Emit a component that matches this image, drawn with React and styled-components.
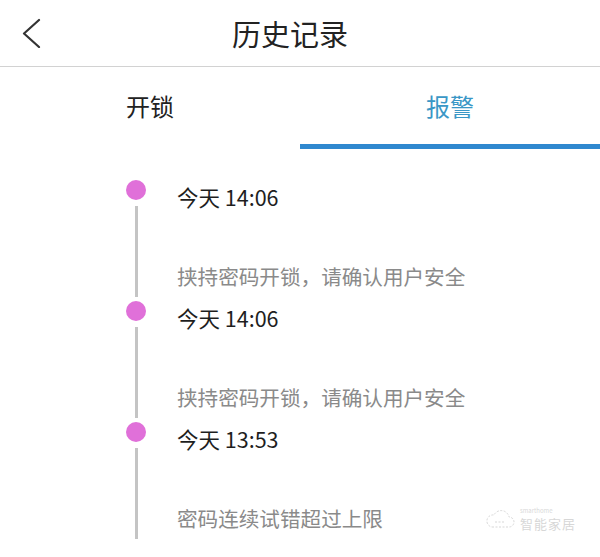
import React, { useState } from 'react';
import styled, { createGlobalStyle } from 'styled-components';

const GlobalStyle = createGlobalStyle`
  html, body {
    margin: 0;
    padding: 0;
    background: #ffffff;
  }
  body {
    font-family: "Noto Sans CJK SC", "Noto Sans", sans-serif;
  }
`;

const Page = styled.div`
  position: relative;
  width: 600px;
  height: 557px;
  overflow: hidden;
  background: #ffffff;
`;

const Header = styled.header`
  display: grid;
  grid-template-columns: 60px 1fr 80px;
  align-items: center;
  height: 66px;
  border-bottom: 1px solid #d2d2d2;
`;

const BackButton = styled.button`
  display: flex;
  align-items: center;
  justify-content: flex-start;
  padding: 0 0 0 20px;
  height: 100%;
  border: 0;
  background: none;
  cursor: pointer;
`;

const Title = styled.h1`
  margin: 0;
  text-align: center;
  font-size: 29px;
  font-weight: 400;
  color: #222222;
  line-height: 40px;
`;

const Tabs = styled.nav`
  display: flex;
`;

const Tab = styled.div`
  flex: 1;
  height: 82px;
  box-sizing: border-box;
  padding-top: 23px;
  text-align: center;
  font-size: 24px;
  line-height: 32px;
  color: ${({ active }) => (active ? '#3a97c6' : '#222222')};
  border-bottom: 5px solid ${({ active }) => (active ? '#2f88cf' : 'transparent')};
  cursor: pointer;
`;

const Timeline = styled.ul`
  list-style: none;
  margin: 0;
  padding: 31px 0 0 126px;
`;

const Item = styled.li`
  display: grid;
  grid-template-columns: 20px 1fr;
  column-gap: 31px;
  height: 121px;
`;

const Rail = styled.div`
  display: flex;
  flex-direction: column;
  align-items: center;
`;

const Dot = styled.span`
  width: 20px;
  height: 20px;
  border-radius: 50%;
  background: #e070d9;
  flex-shrink: 0;
`;

const Line = styled.span`
  flex: 1;
  width: 3px;
  margin: 6px 0 4px;
  background: #c4c4c4;
`;

const Content = styled.div`
  display: flex;
  flex-direction: column;
  padding-top: 3px;
`;

const Time = styled.div`
  font-size: 21.5px;
  line-height: 28px;
  color: #1e1e1e;
`;

const Desc = styled.div`
  margin-top: 51px;
  font-size: 20.6px;
  line-height: 28px;
  color: #8a8a8a;
`;

const Watermark = styled.div`
  position: absolute;
  right: 24px;
  bottom: 26px;
  display: flex;
  align-items: center;
  gap: 4px;
  opacity: 0.55;
`;

const MarkText = styled.div`
  display: flex;
  flex-direction: column;
  gap: 3px;
  color: #b8b8b8;
`;

const MarkSmall = styled.span`
  display: block;
  font-size: 6px;
  line-height: 6px;
`;

const MarkBig = styled.span`
  display: block;
  font-size: 13px;
  line-height: 14px;
  letter-spacing: 1px;
`;

const records = [
  { time: '今天 14:06', desc: '挟持密码开锁，请确认用户安全' },
  { time: '今天 14:06', desc: '挟持密码开锁，请确认用户安全' },
  { time: '今天 13:53', desc: '密码连续试错超过上限' },
];

export default function App() {
  const [tab, setTab] = useState(1);

  return (
    <Page>
      <GlobalStyle />
      <Header>
        <BackButton aria-label="返回">
          <svg width="22" height="30" viewBox="0 0 22 30">
            <polyline
              points="19,2 4,15.5 19,29"
              fill="none"
              stroke="#333"
              strokeWidth="2.2"
              strokeLinecap="round"
              strokeLinejoin="round"
            />
          </svg>
        </BackButton>
        <Title>历史记录</Title>
        <span />
      </Header>
      <Tabs>
        <Tab active={tab === 0} onClick={() => setTab(0)}>开锁</Tab>
        <Tab active={tab === 1} onClick={() => setTab(1)}>报警</Tab>
      </Tabs>
      <Timeline>
        {records.map((r, i) => (
          <Item key={i}>
            <Rail>
              <Dot />
              <Line />
            </Rail>
            <Content>
              <Time>{r.time}</Time>
              <Desc>{r.desc}</Desc>
            </Content>
          </Item>
        ))}
      </Timeline>
      <Watermark>
        <svg width="32" height="24" viewBox="0 0 32 24">
          <path
            d="M8 20 H25 A5 5 0 0 0 25 10 A8 8 0 0 0 10 8 A6 6 0 0 0 8 20 Z"
            fill="none"
            stroke="#b8b8b8"
            strokeWidth="1"
            strokeDasharray="2 1.5"
          />
          <path d="M11 15 H20" stroke="#b8b8b8" strokeWidth="1" strokeDasharray="2 1.5" />
        </svg>
        <MarkText>
          <MarkSmall>smarthome</MarkSmall>
          <MarkBig>智能家居</MarkBig>
        </MarkText>
      </Watermark>
    </Page>
  );
}
